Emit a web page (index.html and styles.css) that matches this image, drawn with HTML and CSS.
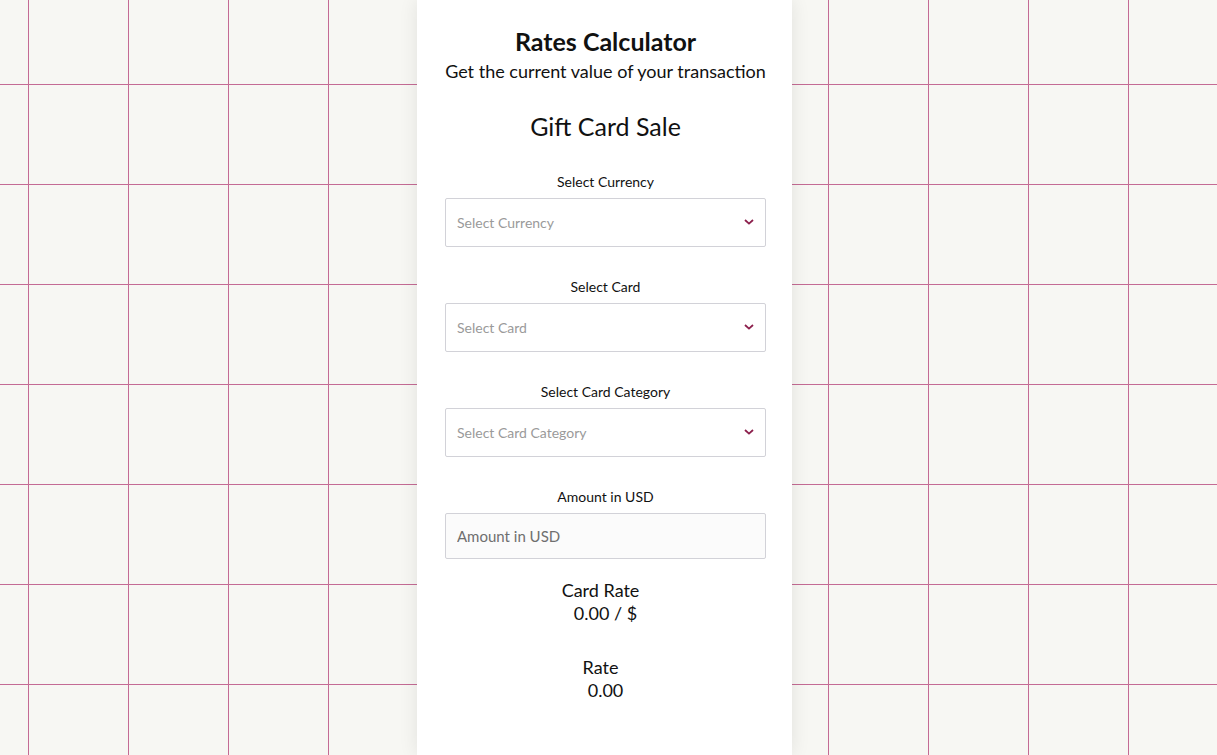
FILE: index.html
```html
<!DOCTYPE html>
<html lang="en">
<head>
    <meta charset="UTF-8">
    <meta name="viewport" content="width=device-width, initial-scale=1.0">
    <title>Rates Calculator</title>
    <link rel="stylesheet" href="styles.css">
</head>
<body>
    <div class="page">
        <div class="card">
            <header class="card-head">
                <h1>Rates Calculator</h1>
                <p class="subtitle">Get the current value of your transaction</p>
            </header>

            <h2 class="form-title">Gift Card Sale</h2>

            <form class="rate-form">
                <div class="field">
                    <label for="currency">Select Currency</label>
                    <div class="select-wrap">
                        <select id="currency" name="currency">
                            <option value="">Select Currency</option>
                        </select>
                        <svg class="chevron" viewBox="0 0 10 6" width="10" height="6"><path d="M1 1l4 3.6L9 1" fill="none" stroke="currentColor" stroke-width="1.8"/></svg>
                    </div>
                </div>

                <div class="field">
                    <label for="card">Select Card</label>
                    <div class="select-wrap">
                        <select id="card" name="card">
                            <option value="">Select Card</option>
                        </select>
                        <svg class="chevron" viewBox="0 0 10 6" width="10" height="6"><path d="M1 1l4 3.6L9 1" fill="none" stroke="currentColor" stroke-width="1.8"/></svg>
                    </div>
                </div>

                <div class="field">
                    <label for="category">Select Card Category</label>
                    <div class="select-wrap">
                        <select id="category" name="category">
                            <option value="">Select Card Category</option>
                        </select>
                        <svg class="chevron" viewBox="0 0 10 6" width="10" height="6"><path d="M1 1l4 3.6L9 1" fill="none" stroke="currentColor" stroke-width="1.8"/></svg>
                    </div>
                </div>

                <div class="field">
                    <label for="amount">Amount in USD</label>
                    <input type="number" id="amount" name="amount" placeholder="Amount in USD">
                </div>
            </form>

            <div class="result">
                <div class="result-label">Card Rate</div>
                <div class="result-value">0.00 / $</div>
            </div>

            <div class="result">
                <div class="result-label">Rate</div>
                <div class="result-value">0.00</div>
            </div>
        </div>
    </div>
</body>
</html>
```

FILE: styles.css
```css
* {
    box-sizing: border-box;
    margin: 0;
    padding: 0;
}

html, body {
    height: 100%;
}

body {
    font-family: Lato, "Noto Sans", sans-serif;
    color: #111;
    background-color: #f7f7f3;
    background-image:
        linear-gradient(to right, #c46b94 1px, transparent 1px),
        linear-gradient(to bottom, #c46b94 1px, transparent 1px);
    background-size: 100px 100px;
    background-position: 28px 84px;
    overflow: hidden;
}

.page {
    display: flex;
    justify-content: center;
    height: 100%;
    padding-right: 8px;
}

.card {
    width: 375px;
    min-height: 100%;
    background-color: #fff;
    box-shadow: 0 0 18px rgba(0, 0, 0, 0.09);
    padding: 24px 26px 0 28px;
    text-align: center;
}

.card-head h1 {
    font-size: 25px;
    font-weight: 700;
    line-height: 34px;
}

.subtitle {
    font-size: 18px;
    line-height: 26px;
    white-space: nowrap;
}

.form-title {
    font-size: 25px;
    font-weight: 400;
    line-height: 34px;
    margin-top: 25px;
}

.rate-form {
    margin-top: 30px;
}

.field {
    margin-bottom: 31px;
}

.field label {
    display: block;
    font-size: 14px;
    line-height: 18px;
    margin-bottom: 7px;
}

.select-wrap {
    position: relative;
}

select, input {
    display: block;
    width: 100%;
    font-family: inherit;
    border: 1px solid #d2d2d8;
    border-radius: 2px;
    padding: 0 11px;
    outline: none;
}

select {
    height: 49px;
    appearance: none;
    background-color: #fff;
    font-size: 14px;
    color: #9a9a9a;
}

.chevron {
    position: absolute;
    right: 12px;
    top: 21px;
    color: #8c1f4c;
    pointer-events: none;
}

input {
    height: 46px;
    background-color: #fbfbfb;
    font-size: 15px;
}

input::placeholder {
    color: #6f6f6f;
}

.field:last-child {
    margin-bottom: 0;
}

.result {
    margin-top: 19px;
}

.result + .result {
    margin-top: 31px;
}

.result-label {
    font-size: 18px;
    line-height: 24px;
    padding-right: 10px;
}

.result-value {
    font-size: 18px;
    line-height: 22px;
}
```
